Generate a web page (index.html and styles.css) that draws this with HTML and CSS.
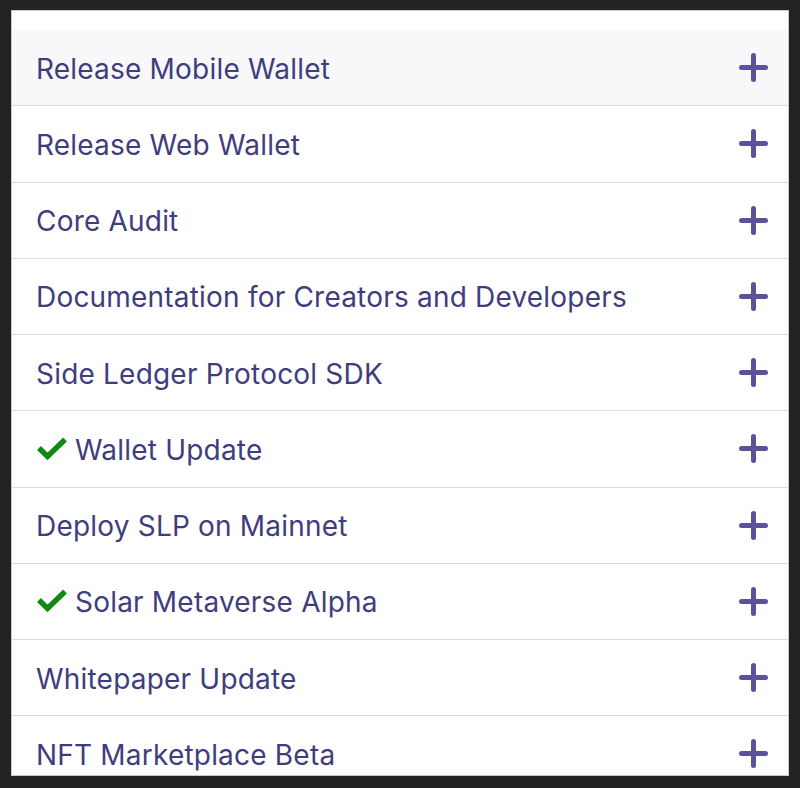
FILE: index.html
```html
<!DOCTYPE html>
<html lang="en">
<head>
    <meta charset="UTF-8">
    <meta name="viewport" content="width=device-width, initial-scale=1.0">
    <title>Roadmap</title>
    <link rel="stylesheet" href="styles.css">
</head>
<body>
    <div class="panel">
        <ul class="roadmap">
            <li class="item active"><span class="title">Release Mobile Wallet</span><span class="plus"></span></li>
            <li class="item"><span class="title">Release Web Wallet</span><span class="plus"></span></li>
            <li class="item"><span class="title">Core Audit</span><span class="plus"></span></li>
            <li class="item"><span class="title">Documentation for Creators and Developers</span><span class="plus"></span></li>
            <li class="item"><span class="title">Side Ledger Protocol SDK</span><span class="plus"></span></li>
            <li class="item"><span class="title"><svg class="check" viewBox="0 0 32 24"><path d="M3 11.5 L11.5 20 L29 3" /></svg>Wallet Update</span><span class="plus"></span></li>
            <li class="item"><span class="title">Deploy SLP on Mainnet</span><span class="plus"></span></li>
            <li class="item"><span class="title"><svg class="check" viewBox="0 0 32 24"><path d="M3 11.5 L11.5 20 L29 3" /></svg>Solar Metaverse Alpha</span><span class="plus"></span></li>
            <li class="item"><span class="title">Whitepaper Update</span><span class="plus"></span></li>
            <li class="item"><span class="title">NFT Marketplace Beta</span><span class="plus"></span></li>
        </ul>
    </div>
</body>
</html>
```

FILE: styles.css
```css
body {
    margin: 0;
    padding: 10px 11px 12px 11px;
    background-color: #232323;
    font-family: Inter, "Noto Sans", sans-serif;
}

.panel {
    height: 764px;
    background-color: #fff;
    border: 1px solid #c8c8c8;
    overflow: hidden;
}

.roadmap {
    list-style: none;
    margin: 0;
    padding: 19px 0 0 0;
}

.item {
    height: 75.25px;
    display: flex;
    align-items: center;
    justify-content: space-between;
    padding: 0 20px 0 24px;
    border-bottom: 1px solid #dcdcdc;
}

.item.active {
    background-color: #f8f8fb;
}

.title {
    display: flex;
    align-items: center;
    font-size: 28px;
    letter-spacing: 0.2px;
    color: #403d7c;
    padding-top: 2px;
}

.check {
    width: 32px;
    height: 25px;
    margin-right: 7px;
    margin-top: -3px;
}

.check path {
    fill: none;
    stroke: #108a10;
    stroke-width: 5.5;
}

.plus {
    position: relative;
    width: 29px;
    height: 29px;
}

.plus::before,
.plus::after {
    content: "";
    position: absolute;
    background-color: #58539b;
    border-radius: 3px;
}

.plus::before {
    left: 0;
    right: 0;
    top: 12px;
    height: 5px;
}

.plus::after {
    top: 0;
    bottom: 0;
    left: 12px;
    width: 5px;
}
```
